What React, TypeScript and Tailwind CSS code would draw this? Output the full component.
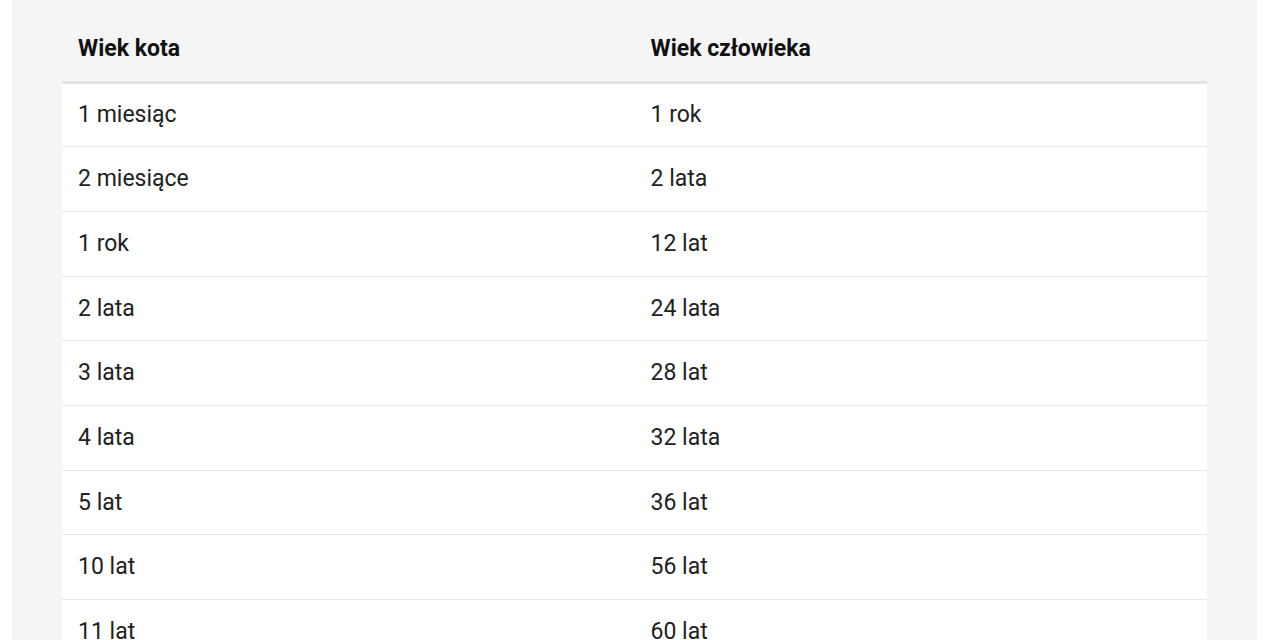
import React from 'react'

const rows = [
  ['1 miesiąc', '1 rok'],
  ['2 miesiące', '2 lata'],
  ['1 rok', '12 lat'],
  ['2 lata', '24 lata'],
  ['3 lata', '28 lat'],
  ['4 lata', '32 lata'],
  ['5 lat', '36 lat'],
  ['10 lat', '56 lat'],
  ['11 lat', '60 lat'],
  ['12 lat', '64 lata'],
  ['15 lat', '76 lat'],
]

const App = () => {
  return (
    <div className="min-h-screen bg-white pl-[12px] pr-[23px] font-['Roboto',sans-serif]">
      <div className="bg-[#f5f5f5] px-[50px] pt-[18px] pb-10">
        <table className="w-full table-fixed border-collapse">
          <thead>
            <tr className="border-b-[3px] border-[#e4e4e4]">
              <th className="h-[64px] px-4 text-left align-middle text-[23px] font-bold text-[#111]">
                Wiek kota
              </th>
              <th className="h-[64px] px-4 text-left align-middle text-[23px] font-bold text-[#111]">
                Wiek człowieka
              </th>
            </tr>
          </thead>
          <tbody className="bg-white">
            {rows.map(([cat, human]) => (
              <tr key={cat} className="border-b border-[#e8e8e8]">
                <td className="h-[64.7px] px-4 pt-[1px] align-middle text-[23px] text-[#222]">{cat}</td>
                <td className="h-[64.7px] px-4 pt-[1px] align-middle text-[23px] text-[#222]">{human}</td>
              </tr>
            ))}
          </tbody>
        </table>
      </div>
    </div>
  )
}

export default App
